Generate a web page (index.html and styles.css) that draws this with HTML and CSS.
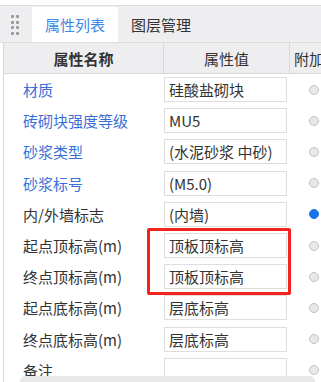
FILE: index.html
```html
<!DOCTYPE html>
<html lang="zh-CN">
  <head>
    <meta charset="UTF-8" />
    <meta name="viewport" content="width=device-width, initial-scale=1.0" />
    <title>属性列表</title>
    <link rel="stylesheet" href="styles.css">
  </head>
  <body>
    <div class="top-strip"></div>
    <div class="tabbar">
      <div class="grip">
        <span></span><span></span><span></span><span></span>
        <span></span><span></span><span></span><span></span>
      </div>
      <div class="tab active">属性列表</div>
      <div class="tab">图层管理</div>
    </div>

    <div class="panel">
      <div class="row head">
        <div class="col-name">属性名称</div>
        <div class="col-value">属性值</div>
        <div class="col-extra">附加</div>
      </div>

      <div class="row">
        <div class="col-name link">材质</div>
        <div class="col-value"><div class="input">硅酸盐砌块</div></div>
        <div class="col-extra"><span class="radio"></span></div>
      </div>
      <div class="row">
        <div class="col-name link">砖砌块强度等级</div>
        <div class="col-value"><div class="input">MU5</div></div>
        <div class="col-extra"><span class="radio"></span></div>
      </div>
      <div class="row">
        <div class="col-name link">砂浆类型</div>
        <div class="col-value"><div class="input">(水泥砂浆 中砂)</div></div>
        <div class="col-extra"><span class="radio"></span></div>
      </div>
      <div class="row">
        <div class="col-name link">砂浆标号</div>
        <div class="col-value"><div class="input">(M5.0)</div></div>
        <div class="col-extra"><span class="radio"></span></div>
      </div>
      <div class="row">
        <div class="col-name">内/外墙标志</div>
        <div class="col-value"><div class="input">(内墙)</div></div>
        <div class="col-extra"><span class="radio on"></span></div>
      </div>
      <div class="row">
        <div class="col-name">起点顶标高(m)</div>
        <div class="col-value"><div class="input">顶板顶标高</div></div>
        <div class="col-extra"><span class="radio"></span></div>
      </div>
      <div class="row">
        <div class="col-name">终点顶标高(m)</div>
        <div class="col-value"><div class="input">顶板顶标高</div></div>
        <div class="col-extra"><span class="radio"></span></div>
      </div>
      <div class="row">
        <div class="col-name">起点底标高(m)</div>
        <div class="col-value"><div class="input">层底标高</div></div>
        <div class="col-extra"><span class="radio"></span></div>
      </div>
      <div class="row">
        <div class="col-name">终点底标高(m)</div>
        <div class="col-value"><div class="input">层底标高</div></div>
        <div class="col-extra"><span class="radio"></span></div>
      </div>
      <div class="row">
        <div class="col-name">备注</div>
        <div class="col-value"><div class="input"></div></div>
        <div class="col-extra"><span class="radio"></span></div>
      </div>
    </div>

    <div class="highlight"></div>
    <div class="hscroll"></div>
  </body>
</html>
```

FILE: styles.css
```css
html,
body {
  margin: 0;
  height: 382px;
  overflow: hidden;
}

body {
  position: relative;
  width: 321px;
  background-color: #fff;
  font-family: "Noto Sans CJK SC", "Microsoft YaHei", sans-serif;
  font-size: 15px;
  color: #333;
}

.top-strip {
  height: 5px;
  border-bottom: 1px solid #dcdcdc;
}

.tabbar {
  display: flex;
  height: 36px;
  background-color: #eeeef0;
  border-bottom: 1px solid #dcdcdc;
}

.grip {
  display: grid;
  grid-template-columns: 3px 3px;
  grid-auto-rows: 3px;
  column-gap: 2px;
  row-gap: 2.5px;
  width: 21px;
  padding: 9px 0 0 11px;
}

.grip span {
  background-color: #9a9a9a;
  border-radius: 1px;
}

.tab {
  display: flex;
  align-items: center;
  padding: 0 13px;
  height: 35px;
  margin-top: 1px;
  color: #333;
}

.tab.active {
  background-color: #fff;
  color: #3c8ae6;
  width: 60px;
}

.panel {
  margin-left: 3px;
  border-left: 1px solid #d8d8d8;
  min-height: 400px;
}

.row {
  display: flex;
  align-items: center;
  height: 31.2px;
}

.row.head {
  height: 30px;
  background-color: #eeeef0;
  border-bottom: 1px solid #d8d8d8;
  font-weight: bold;
}

.col-name {
  width: 140px;
  flex: none;
  padding-left: 19px;
  white-space: nowrap;
}

.head .col-name {
  padding-left: 0;
  width: 159px;
  text-align: center;
}

.col-value {
  width: 126px;
  flex: none;
}

.head .col-value {
  align-self: stretch;
  display: flex;
  align-items: center;
  justify-content: center;
  border-left: 1px solid #d8d8d8;
  border-right: 1px solid #d8d8d8;
  width: 125px;
  font-weight: normal;
}

.col-extra {
  flex: none;
  width: 60px;
}

.head .col-extra {
  padding-left: 4px;
  font-weight: normal;
}

.link {
  color: #3a6fd9;
}

.input {
  box-sizing: border-box;
  margin-left: 1px;
  width: 123px;
  height: 25px;
  border: 1px solid #dedede;
  background-color: #fff;
  padding-left: 4px;
  line-height: 23px;
  white-space: nowrap;
  overflow: hidden;
}

.radio {
  display: block;
  box-sizing: border-box;
  margin-left: 20px;
  width: 10px;
  height: 10px;
  border-radius: 50%;
  border: 1px solid #c2c2c2;
  background-color: #e8e8e8;
}

.radio.on {
  border-color: #1a73e8;
  background-color: #1a73e8;
}

.highlight {
  position: absolute;
  left: 147px;
  top: 228px;
  width: 138px;
  height: 61px;
  border: 3px solid #f2231b;
  border-radius: 2px;
}

.hscroll {
  position: absolute;
  left: 20px;
  top: 376px;
  width: 295px;
  height: 12px;
  border-radius: 5px;
  background-color: #e9e9e9;
}
```
